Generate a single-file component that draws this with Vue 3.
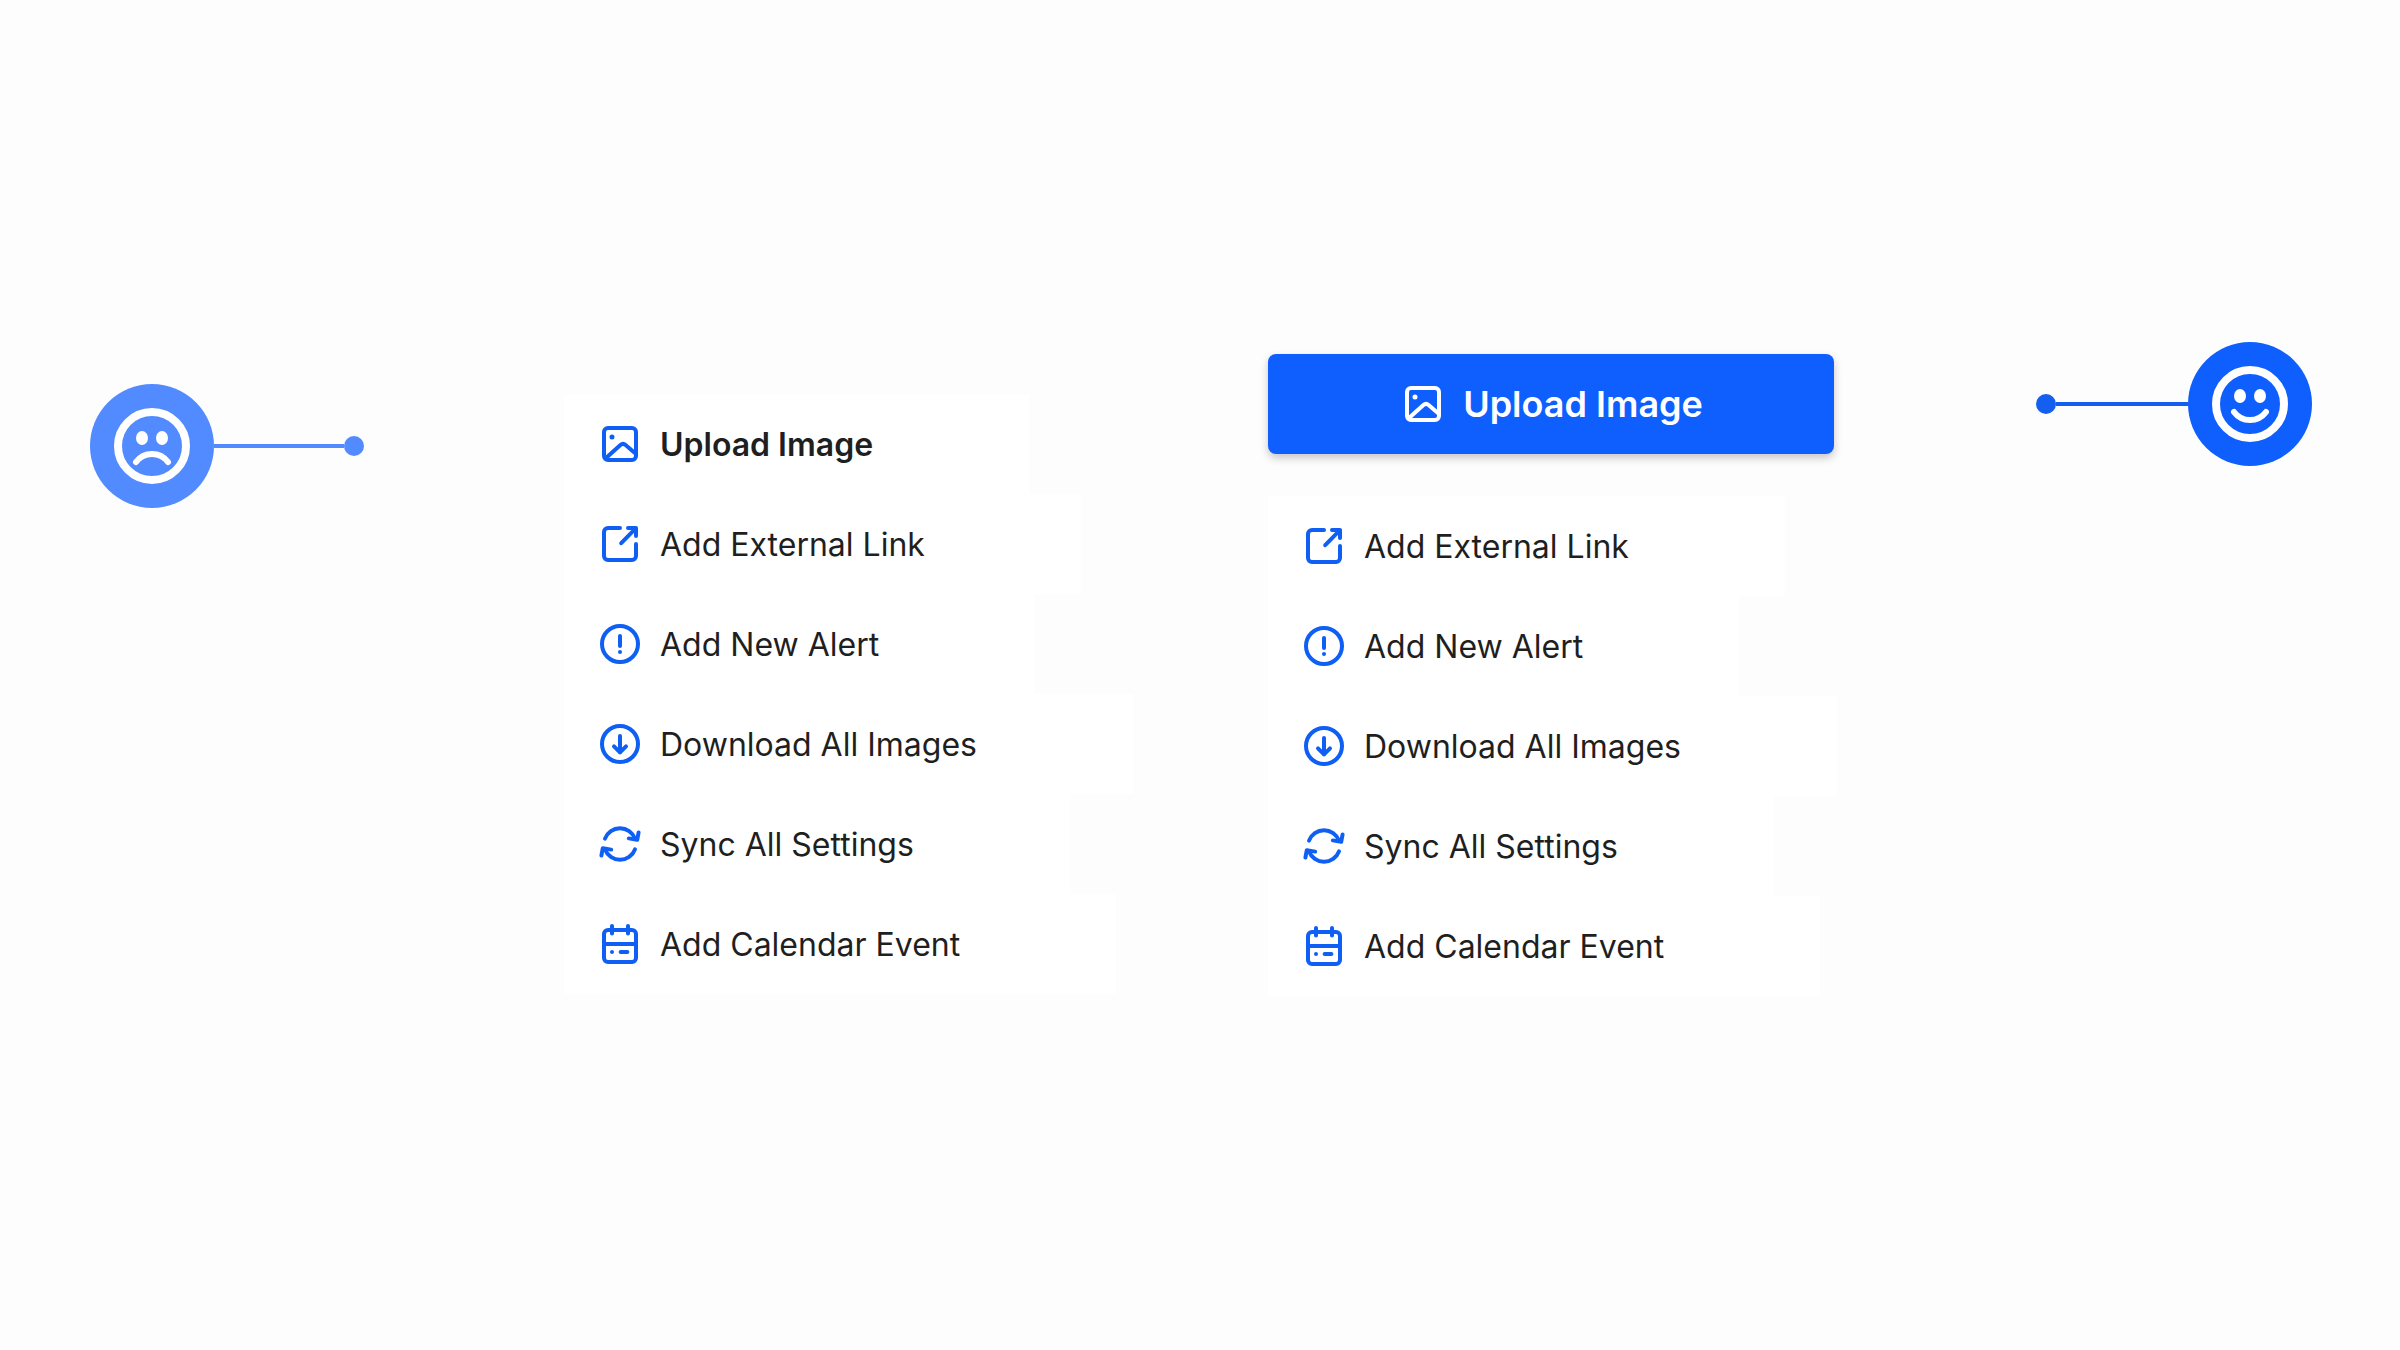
<script setup>
const icons = {
  image: ['M6 4h12a2 2 0 0 1 2 2v12a2 2 0 0 1-2 2H6a2 2 0 0 1-2-2V6a2 2 0 0 1 2-2z', 'M5 19l7.2-6.5q1.3-1.1 2.6 0L20 17', 'M7.75 8.5a.25.25 0 1 0 .5 0a.25.25 0 1 0-.5 0'],
  external: ['M12 4H6a2 2 0 0 0-2 2v12a2 2 0 0 0 2 2h12a2 2 0 0 0 2-2v-6', 'M16 4h4v4', 'M19.6 4.4L12.6 11.6'],
  alert: ['M12 3a9 9 0 1 0 0 18a9 9 0 1 0 0-18z', 'M12 8v5', 'M12 16v.01'],
  download: ['M12 3a9 9 0 1 0 0 18a9 9 0 1 0 0-18z', 'M12 8v8', 'M9 13.2l3 3l3-3'],
  sync: ['M4.5 9.3A8 8 0 0 1 19.5 9.3', 'M21.3 6.2L20.6 9.9L16.4 9.2', 'M19.5 14.7A8 8 0 0 1 4.5 14.7', 'M2.7 17.8L3.4 14.1L7.6 14.8'],
  calendar: ['M6 5h12a2 2 0 0 1 2 2v12a2 2 0 0 1-2 2H6a2 2 0 0 1-2-2V7a2 2 0 0 1 2-2z', 'M8 3v3.7', 'M16 3v3.7', 'M4 12h16', 'M8 16v.01', 'M12.3 16h3.4'],
}

const actions = [
  { icon: 'external', label: 'Add External Link' },
  { icon: 'alert', label: 'Add New Alert' },
  { icon: 'download', label: 'Download All Images' },
  { icon: 'sync', label: 'Sync All Settings' },
  { icon: 'calendar', label: 'Add Calendar Event' },
]

const allActions = [{ icon: 'image', label: 'Upload Image', strong: true }, ...actions]
</script>

<template>
  <main class="page">
    <section class="example before">
      <div class="marker sad">
        <svg class="face" viewBox="0 0 124 124" role="img" aria-label="Weak hierarchy">
          <circle cx="62" cy="62" r="62" fill="currentColor" />
          <circle cx="62" cy="62" r="34" fill="none" stroke="#fff" stroke-width="8" />
          <ellipse cx="52" cy="54" rx="6" ry="7" fill="#fff" />
          <ellipse cx="72" cy="54" rx="6" ry="7" fill="#fff" />
          <path d="M46 78A20 20 0 0 1 78 78" fill="none" stroke="#fff" stroke-width="6" stroke-linecap="round" />
        </svg>
        <span class="line"></span>
        <span class="dot"></span>
      </div>
      <ul class="menu">
        <li v-for="item in allActions" :key="item.label">
          <button type="button" class="row" :class="{ strong: item.strong }">
            <svg class="icon" viewBox="0 0 24 24" aria-hidden="true">
              <path v-for="d in icons[item.icon]" :key="d" :d="d" />
            </svg>
            <span>{{ item.label }}</span>
          </button>
        </li>
      </ul>
    </section>

    <section class="example after">
      <div class="stack">
        <button type="button" class="primary">
          <svg class="icon" viewBox="0 0 24 24" aria-hidden="true">
            <path v-for="d in icons.image" :key="d" :d="d" />
          </svg>
          <span>Upload Image</span>
        </button>
        <ul class="menu">
          <li v-for="item in actions" :key="item.label">
            <button type="button" class="row">
              <svg class="icon" viewBox="0 0 24 24" aria-hidden="true">
                <path v-for="d in icons[item.icon]" :key="d" :d="d" />
              </svg>
              <span>{{ item.label }}</span>
            </button>
          </li>
        </ul>
      </div>
      <div class="marker happy">
        <span class="dot"></span>
        <span class="line"></span>
        <svg class="face" viewBox="0 0 124 124" role="img" aria-label="Strong hierarchy">
          <circle cx="62" cy="62" r="62" fill="currentColor" />
          <circle cx="62" cy="62" r="34" fill="none" stroke="#fff" stroke-width="8" />
          <ellipse cx="52" cy="54" rx="6" ry="7" fill="#fff" />
          <ellipse cx="72" cy="54" rx="6" ry="7" fill="#fff" />
          <path d="M46 70A20 20 0 0 0 78 70" fill="none" stroke="#fff" stroke-width="6" stroke-linecap="round" />
        </svg>
      </div>
    </section>
  </main>
</template>

<style>
body {
  margin: 0;
  background: #fdfdfd;
}
</style>

<style scoped>
.page {
  box-sizing: border-box;
  min-height: 100vh;
  padding: 342px 88px 80px 90px;
  display: flex;
  justify-content: space-between;
  align-items: flex-start;
  font-family: Inter, "Liberation Sans", sans-serif;
  color: #1f1f1f;
}

.example {
  display: flex;
  align-items: flex-start;
  gap: 200px;
}

.before {
  padding-top: 42px;
}

.after {
  gap: 202px;
}

.before .menu {
  margin-top: 10px;
}

.stack {
  width: 566px;
  margin-top: 12px;
  display: flex;
  flex-direction: column;
  gap: 42px;
}

.marker {
  display: flex;
  align-items: center;
}

.sad {
  color: #528aff;
}

.happy {
  color: #0f5fff;
}

.face {
  display: block;
  width: 124px;
  height: 124px;
}

.line {
  width: 132px;
  height: 4px;
  background: currentColor;
}

.sad .line {
  width: 130px;
}

.happy .line,
.happy .dot {
  background: #155ff0;
}

.dot {
  width: 20px;
  height: 20px;
  border-radius: 50%;
  background: currentColor;
}

.menu {
  margin: 0;
  padding: 0;
  list-style: none;
}

.row,
.primary {
  display: flex;
  align-items: center;
  gap: 16px;
  height: 100px;
  border: 0;
  font-family: inherit;
  white-space: nowrap;
  cursor: pointer;
}

.row {
  padding: 0 156px 0 32px;
  background: #fff;
  color: inherit;
  font-size: 32px;
  font-weight: 400;
}

.row.strong {
  font-weight: 600;
}

.row .icon {
  color: #0f5ff5;
}

.primary {
  justify-content: center;
  padding: 0 32px;
  border-radius: 8px;
  background: #0f5fff;
  color: #fff;
  font-size: 36px;
  font-weight: 600;
  box-shadow: 0 4px 8px rgba(0, 0, 0, 0.22);
}

.icon {
  flex: none;
  width: 48px;
  height: 48px;
  fill: none;
  stroke: currentColor;
  stroke-width: 2;
  stroke-linecap: round;
  stroke-linejoin: round;
}
</style>
